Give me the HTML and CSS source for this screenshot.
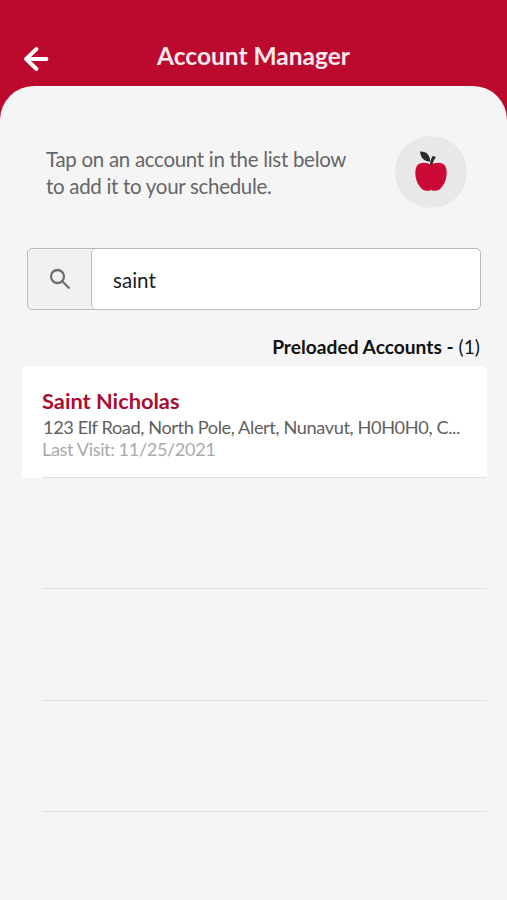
FILE: index.html
```html
<!DOCTYPE html>
<html lang="en">
<head>
    <meta charset="UTF-8">
    <title>Account Manager</title>
    <link rel="stylesheet" href="styles.css">
</head>
<body>
<header class="header">
    <button class="header__back" aria-label="Back">
        <svg width="26" height="26" viewBox="0 0 26 26">
            <path d="M13.5 3 L3 13 L13.5 23 M3.5 13 H23.5"/>
        </svg>
    </button>
    <h1 class="header__title">Account Manager</h1>
</header>
<main class="panel">
    <div class="intro">
        <p class="intro__text">Tap on an account in the list below<br>to add it to your schedule.</p>
        <div class="intro__badge">
            <svg width="34" height="42" viewBox="0 0 34 42">
                <path class="leaf" d="M6 1.500 C12 1 16.500 5 16 11.500 C10.500 12 6.500 7.500 6 1.500 Z"/>
                <path class="leaf" d="M16 16 C16 11 17 8.500 18.700 6 L22 7 C20 9.500 18.700 12 18.500 16 Z"/>
                <path class="apple" d="M17 15 C20 12.500 27 11.500 30.500 15 C34.500 20.500 32.500 31 28.500 36 C26 40.500 21.500 42 17 40 C12.500 42 8 40.500 5.500 36 C1.500 31 -.5 20.500 3.500 15 C7 11.500 14 12.500 17 15 Z"/>
            </svg>
        </div>
    </div>
    <div class="search">
        <div class="search__icon">
            <svg width="24" height="24" viewBox="0 0 24 24">
                <circle cx="9.500" cy="9.500" r="6.500"/>
                <path d="M14 14 L21.500 21.500"/>
            </svg>
        </div>
        <input class="search__input" type="text" value="saint">
    </div>
    <div class="list-title"><b>Preloaded Accounts -</b> (1)</div>
    <ul class="list">
        <li class="list__item list__item--filled">
            <div class="list__row">
                <div class="list__name">Saint Nicholas</div>
                <div class="list__address">123 Elf Road, North Pole, Alert, Nunavut, H0H0H0, C...</div>
                <div class="list__visit">Last Visit: 11/25/2021</div>
            </div>
        </li>
        <li class="list__item"><div class="list__row"></div></li>
        <li class="list__item"><div class="list__row"></div></li>
        <li class="list__item"><div class="list__row"></div></li>
    </ul>
</main>
</body>
</html>
```
FILE: styles.css
```css
*{
    box-sizing: border-box;
    margin: 0;
    padding: 0;
}
body{
    display: flex;
    flex-direction: column;
    height: 100vh;
    overflow: hidden;
    background-color: #bb0a2e;
    font-family: Lato, "Liberation Sans", sans-serif;
}
.header{
    display: grid;
    grid-template-columns: 60px 1fr 60px;
    height: 86px;
    padding-top: 24px;
    align-items: center;
}
.header__back{
    width: 26px;
    height: 26px;
    margin-left: 23px;
    margin-top: 7px;
    border: none;
    background: none;
}
.header__back svg{
    display: block;
    fill: none;
    stroke: #fff;
    stroke-width: 3.8;
    stroke-linecap: round;
    stroke-linejoin: round;
}
.header__title{
    color: #fbe9ed;
    font-size: 24.5px;
    font-weight: bold;
    text-align: center;
}
.panel{
    flex: 1;
    padding: 50px 20px 0 22px;
    border-radius: 34px 34px 0 0;
    background-color: #f5f5f5;
}
.intro{
    display: flex;
    justify-content: space-between;
    height: 72px;
    padding: 0 20px 0 24px;
}
.intro__text{
    padding-top: 10px;
    color: #666;
    font-size: 20.5px;
    line-height: 27px;
    letter-spacing: -.3px;
}
.intro__badge{
    display: flex;
    justify-content: center;
    width: 72px;
    height: 72px;
    padding-top: 14px;
    border-radius: 50%;
    background-color: #e8e8e8;
}
.leaf{
    fill: #2b2b2e;
}
.apple{
    fill: #cb0935;
}
.search{
    display: flex;
    height: 62px;
    margin: 40px 6px 0 5px;
    border: 1.5px solid #bbb;
    border-radius: 5px;
    background-color: #f2f0f0;
}
.search__icon{
    display: flex;
    align-items: center;
    justify-content: center;
    width: 63px;
}
.search__icon svg{
    fill: none;
    stroke: #707070;
    stroke-width: 2.3;
}
.search__input{
    flex: 1;
    min-width: 0;
    padding: 1px 20px 0 21px;
    border: none;
    border-left: 1px solid #bbb;
    border-radius: 5px;
    background-color: #fff;
    color: #1c1c1c;
    font-family: inherit;
    font-size: 20.6px;
    outline: none;
}
.list-title{
    height: 56px;
    padding: 23px 7px 0 0;
    color: #111;
    font-size: 19.2px;
    line-height: 28px;
    text-align: right;
}
.list{
    list-style: none;
}
.list__item{
    padding-left: 20px;
}
.list__item--filled{
    border-radius: 6px 6px 0 0;
    background-color: #fff;
}
.list__row{
    height: 111.6px;
    padding: 21px 20px 0 0;
    border-bottom: 1.5px solid #e1e1e1;
}
.list__name{
    color: #a90d33;
    font-size: 21.8px;
    font-weight: bold;
    line-height: 28px;
}
.list__address{
    padding-left: 1px;
    color: #606060;
    font-size: 18.2px;
    line-height: 24px;
    letter-spacing: -.4px;
    white-space: nowrap;
}
.list__visit{
    color: #aaa;
    font-size: 18.2px;
    line-height: 20px;
    letter-spacing: -.4px;
}
```
